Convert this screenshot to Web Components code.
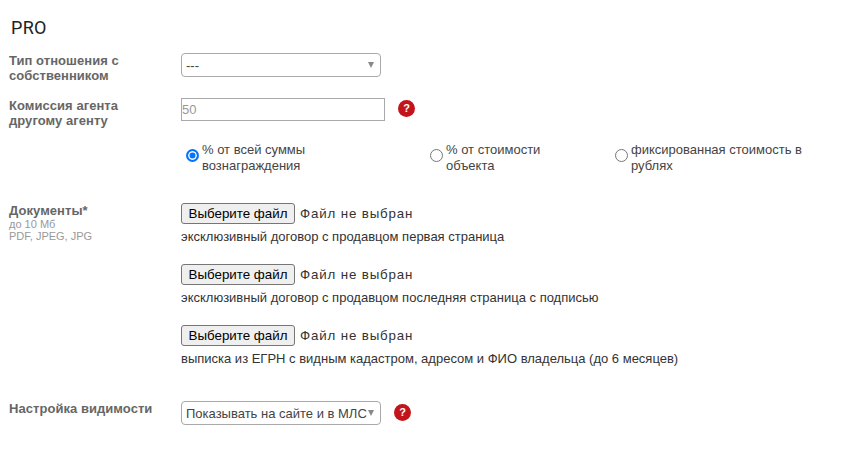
<!DOCTYPE html>
<html lang="ru">
<head>
<meta charset="utf-8">
<title>PRO</title>
<style>
html, body { margin: 0; padding: 0; background: #fff; }
body { font-family: "Liberation Sans", Arial, sans-serif; color: #333; }
</style>
</head>
<body>
<pro-form>
  <pro-row height="45" label="Тип отношения с собственником">
    <pro-select width="200" value="---"></pro-select>
  </pro-row>
  <pro-row height="44" label="Комиссия агента другому агенту">
    <pro-input value="50"></pro-input>
    <pro-help left="13" down="-1"></pro-help>
  </pro-row>
  <pro-radios>
    <pro-radio checked width="244" text-width="168">% от всей суммы вознаграждения</pro-radio>
    <pro-radio width="185" text-width="140">% от стоимости объекта</pro-radio>
    <pro-radio width="200" text-width="190">фиксированная стоимость в рублях</pro-radio>
  </pro-radios>
  <pro-row height="198" label="Документы*" hint="до 10 Мб&#10;PDF, JPEG, JPG">
    <pro-files>
      <pro-file>эксклюзивный договор с продавцом первая страница</pro-file>
      <pro-file>эксклюзивный договор с продавцом последняя страница с подписью</pro-file>
      <pro-file>выписка из ЕГРН с видным кадастром, адресом и ФИО владельца (до 6 месяцев)</pro-file>
    </pro-files>
  </pro-row>
  <pro-row wide label="Настройка видимости">
    <pro-select width="200" value="Показывать на сайте и в МЛС"></pro-select>
    <pro-help left="13" down="0"></pro-help>
  </pro-row>
</pro-form>
<script>
class ProForm extends HTMLElement {
  constructor() {
    super();
    this.root = this.attachShadow({ mode: 'open' });
    this.root.innerHTML = `
    <style>
      :host { display: block; padding: 18px 0 0 9px; }
      h2 { margin: 0 0 15px 2px; font: 400 18px/20px Roboto, sans-serif; color: #222; letter-spacing: .3px; }
    </style>
    <h2>PRO</h2>
    <slot></slot>`;
  }
}
customElements.define('pro-form', ProForm);

class ProRow extends HTMLElement {
  constructor() {
    super();
    this.root = this.attachShadow({ mode: 'open' });
    this.root.innerHTML = `
    <style>
      :host { display: grid; grid-template-columns: 172px 1fr; box-sizing: border-box; }
      .label { font: 700 13px/15px "Liberation Sans", Arial, sans-serif; color: #666; letter-spacing: .05px; width: 125px; }
      :host([wide]) .label { width: 165px; }
      .hint { font: 400 11px/12px "Liberation Sans", Arial, sans-serif; color: #999; white-space: pre-line; }
      .control { display: flex; align-items: flex-start; }
    </style>
    <div>
      <div class="label"></div>
      <div class="hint"></div>
    </div>
    <div class="control"><slot></slot></div>`;
  }
  connectedCallback() {
    this.root.querySelector('.label').textContent = this.getAttribute('label');
    this.root.querySelector('.hint').textContent = this.getAttribute('hint') || '';
    if (this.hasAttribute('height')) this.style.height = this.getAttribute('height') + 'px';
  }
}
customElements.define('pro-row', ProRow);

class ProSelect extends HTMLElement {
  constructor() {
    super();
    this.root = this.attachShadow({ mode: 'open' });
    this.root.innerHTML = `
    <style>
      :host { display: block; box-sizing: border-box; height: 24px; border: 1px solid #a9a9a9; border-radius: 4px; background: #fff; }
      .box { display: flex; align-items: center; justify-content: space-between; height: 22px; padding: 2px 6px 0 4px; box-sizing: border-box;
        font: 400 13px/16px "Liberation Sans", Arial, sans-serif; color: #444; white-space: nowrap; }
      i { flex: none; width: 0; height: 0; border-left: 3.5px solid transparent; border-right: 3.5px solid transparent; border-top: 6px solid #888; margin-bottom: 2px; }
    </style>
    <div class="box"><span></span><i></i></div>`;
  }
  connectedCallback() {
    this.style.width = this.getAttribute('width') + 'px';
    this.root.querySelector('span').textContent = this.getAttribute('value');
  }
}
customElements.define('pro-select', ProSelect);

class ProInput extends HTMLElement {
  constructor() {
    super();
    this.root = this.attachShadow({ mode: 'open' });
    this.root.innerHTML = `
    <style>
      :host { display: block; }
      input { display: block; box-sizing: border-box; width: 204px; height: 23px; margin: 0; padding: 0; border: 1px solid #a9a9a9; border-radius: 0; outline: 0;
        font: 400 13px "Liberation Sans", Arial, sans-serif; color: #999; background: #fff; }
    </style>
    <input type="text">`;
  }
  connectedCallback() {
    this.root.querySelector('input').value = this.getAttribute('value');
  }
}
customElements.define('pro-input', ProInput);

class ProHelp extends HTMLElement {
  constructor() {
    super();
    this.root = this.attachShadow({ mode: 'open' });
    this.root.innerHTML = `
    <style>
      :host { display: flex; align-items: center; justify-content: center; flex: none; width: 17px; height: 17px; border-radius: 50%; background: #c3141c;
        font: 700 11px/17px "Liberation Sans", Arial, sans-serif; color: #fff; }
    </style>
    ?`;
  }
  connectedCallback() {
    this.style.marginLeft = this.getAttribute('left') + 'px';
    this.style.marginTop = (3 + Number(this.getAttribute('down'))) + 'px';
  }
}
customElements.define('pro-help', ProHelp);

class ProRadios extends HTMLElement {
  constructor() {
    super();
    this.root = this.attachShadow({ mode: 'open' });
    this.root.innerHTML = `
    <style>
      :host { display: flex; height: 61px; padding-left: 176px; }
    </style>
    <slot></slot>`;
  }
}
customElements.define('pro-radios', ProRadios);

class ProRadio extends HTMLElement {
  constructor() {
    super();
    this.root = this.attachShadow({ mode: 'open' });
    this.root.innerHTML = `
    <style>
      :host { display: flex; align-items: flex-start; box-sizing: border-box; flex: none; }
      .dot { flex: none; box-sizing: border-box; width: 13px; height: 13px; margin: 7px 3px 0 1px; border: 1px solid #767676; border-radius: 50%; background: #fff; }
      :host([checked]) .dot { border: 2px solid #0075ff; background: #0075ff; box-shadow: inset 0 0 0 1.5px #fff; }
      .text { font: 400 13px/16px "Liberation Sans", Arial, sans-serif; color: #444; }
    </style>
    <span class="dot"></span>
    <span class="text"><slot></slot></span>`;
  }
  connectedCallback() {
    this.style.width = this.getAttribute('width') + 'px';
    this.root.querySelector('.text').style.width = this.getAttribute('text-width') + 'px';
  }
}
customElements.define('pro-radio', ProRadio);

class ProFiles extends HTMLElement {
  constructor() {
    super();
    this.root = this.attachShadow({ mode: 'open' });
    this.root.innerHTML = `
    <style>
      :host { display: flex; flex-direction: column; gap: 21px; }
    </style>
    <slot></slot>`;
  }
}
customElements.define('pro-files', ProFiles);

class ProFile extends HTMLElement {
  constructor() {
    super();
    this.root = this.attachShadow({ mode: 'open' });
    this.root.innerHTML = `
    <style>
      :host { display: block; height: 40px; }
      .line { display: flex; align-items: center; height: 21px; }
      button { box-sizing: border-box; width: 114px; height: 21px; margin: 0 5px 0 0; padding: 0; border: 1px solid #767676; border-radius: 3px; background: #efefef;
        font: 400 13.33px "Liberation Sans", Arial, sans-serif; color: #000; }
      .none { font: 400 13.33px "Liberation Sans", Arial, sans-serif; color: #333; letter-spacing: .85px; }
      .caption { margin-top: 5px; font: 400 13px/15px "Liberation Sans", Arial, sans-serif; color: #333; white-space: nowrap; }
    </style>
    <div class="line"><button type="button">Выберите файл</button><span class="none">Файл не выбран</span></div>
    <div class="caption"><slot></slot></div>`;
  }
}
customElements.define('pro-file', ProFile);
</script>
</body>
</html>
